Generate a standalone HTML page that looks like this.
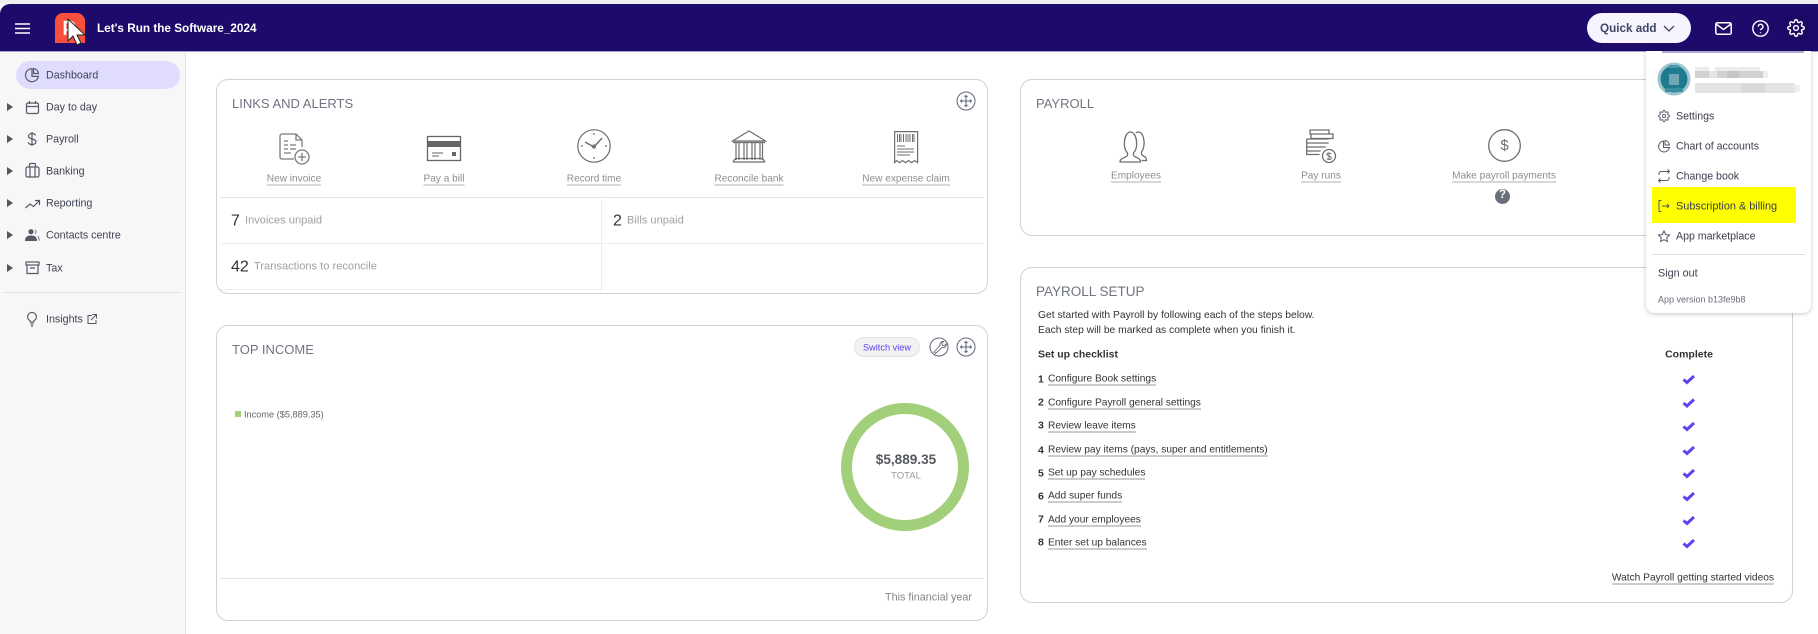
<!DOCTYPE html>
<html><head><meta charset="utf-8"><style>
html,body{margin:0;padding:0}
body{width:1818px;height:634px;position:relative;overflow:hidden;background:#fff;font-family:"Liberation Sans",sans-serif;color:#555}
.t{position:absolute;white-space:nowrap;transform:translateY(-50%);line-height:1.2}
.c{transform:translate(-50%,-50%);text-align:center}
.r{transform:translate(-100%,-50%)}
.box{position:absolute;box-sizing:border-box}
.card{position:absolute;box-sizing:border-box;border:1px solid #d2d2d2;border-radius:12px;background:#fff}
.h{font-size:13px;color:#6f7480}
.lnk{font-size:10.1px;color:#8d8d8d;border-bottom:1px solid #b0b0b0;line-height:10px}
.nav{font-size:10.7px;color:#3f4254;left:46px;margin-top:.5px}
.arr{position:absolute;left:7px;width:0;height:0;border-left:6px solid #555;border-top:4.5px solid transparent;border-bottom:4.5px solid transparent}
.num{font-size:16px;color:#333}
.lab{font-size:11.1px;color:#a0a0a0}
.s{font-size:10.2px;color:#333}
.b{font-weight:bold;color:#333}
.sb{font-size:10.5px}
.sl{border-bottom:1px solid #9a9a9a;line-height:10px}
.m{font-size:10.6px;color:#3a3d4d}
svg{position:absolute;overflow:visible}
</style></head><body>

<div class="box" style="left:0;top:0;width:1818px;height:4px;background:#f0f0f0"></div>
<div class="box" style="left:0;top:52px;width:186px;height:582px;background:#f7f7f7;border-right:1px solid #e6e6e6"></div>
<div class="box" style="left:0;top:4px;width:1818px;height:47px;background:#1d0a6b;border-top-left-radius:10px"></div>
<div class="box" style="left:0;top:51px;width:1818px;height:1px;background:#a79fc9"></div>
<div class="box" style="left:1783px;top:15px;width:27px;height:27px;background:#1b0963"></div>

<svg style="left:15px;top:23px" width="15" height="11" fill="none" stroke="#fff" stroke-width="1.6"><path d="M0 1h15M0 5.500h15M0 10h15"/></svg>
<svg style="left:55px;top:13px" width="32" height="36" viewBox="0 0 32 36">
<path d="M0 30V8a8 8 0 0 1 8-8h14a8 8 0 0 1 8 8v22z" fill="#f9503e"/>
<path d="M10 22V9h5a3.500 3.500 0 0 1 0 8h-5" stroke="#fff" stroke-width="2.600" fill="none"/>
<path d="M13 6v22l5-5 4 9 4-2-4-8h8z" fill="#fff" stroke="#222" stroke-width="1"/>
</svg>
<div class="t b" style="left:97px;top:29px;font-size:11.75px;color:#fff">Let's Run the Software_2024</div>

<div class="box" style="left:1587px;top:13px;width:104px;height:30px;border-radius:15px;background:#f6f5ff"></div>
<div class="t" style="left:1600px;top:29px;font-size:11.7px;font-weight:bold;color:#3f4462">Quick add</div>
<svg style="left:1663px;top:25px" width="12" height="8" fill="none" stroke="#3f4462" stroke-width="1.300"><path d="M1 1l5 5 5-5"/></svg>
<svg style="left:1715px;top:22px" width="17" height="13" fill="none" stroke="#fff" stroke-width="1.500"><rect x=".8" y=".8" width="15.400" height="11.400" rx="1.500"/><path d="M1 2l7.500 5.500L16 2"/></svg>
<svg style="left:1752px;top:20px" width="17" height="17" fill="none" stroke="#fff" stroke-width="1.400"><circle cx="8.500" cy="8.500" r="7.700"/><path d="M6.300 6.700a2.300 2.300 0 1 1 3.300 2c-.8.4-1.100.9-1.100 1.600"/><path d="M8.500 12.300v1" stroke-width="1.500"/></svg>
<svg style="left:1787px;top:19px" width="18" height="18" viewBox="0 0 24 24" fill="none" stroke="#fff" stroke-width="1.900" stroke-linejoin="round"><circle cx="12" cy="12" r="3.200"/><path d="M19.4 15a1.65 1.65 0 0 0 .33 1.82l.06.06a2 2 0 0 1 0 2.83 2 2 0 0 1-2.83 0l-.06-.06a1.65 1.65 0 0 0-1.82-.33 1.65 1.65 0 0 0-1 1.51V21a2 2 0 0 1-2 2 2 2 0 0 1-2-2v-.09A1.65 1.65 0 0 0 9 19.4a1.65 1.65 0 0 0-1.82.33l-.06.06a2 2 0 0 1-2.83 0 2 2 0 0 1 0-2.83l.06-.06a1.65 1.65 0 0 0 .33-1.82 1.65 1.65 0 0 0-1.51-1H3a2 2 0 0 1-2-2 2 2 0 0 1 2-2h.09A1.65 1.65 0 0 0 4.6 9a1.65 1.65 0 0 0-.33-1.82l-.06-.06a2 2 0 0 1 0-2.83 2 2 0 0 1 2.83 0l.06.06a1.65 1.65 0 0 0 1.82.33H9a1.65 1.65 0 0 0 1-1.51V3a2 2 0 0 1 2-2 2 2 0 0 1 2 2v.09a1.65 1.65 0 0 0 1 1.51 1.65 1.65 0 0 0 1.82-.33l.06-.06a2 2 0 0 1 2.83 0 2 2 0 0 1 0 2.83l-.06.06a1.65 1.65 0 0 0-.33 1.82V9a1.65 1.65 0 0 0 1.51 1H21a2 2 0 0 1 2 2 2 2 0 0 1-2 2h-.09a1.65 1.65 0 0 0-1.51 1z"/></svg>

<!-- sidebar -->
<div class="box" style="left:16px;top:61px;width:164px;height:28px;border-radius:14px;background:#e0dcfd"></div>
<div class="t nav" style="top:75px">Dashboard</div>
<div class="t nav" style="top:107px">Day to day</div>
<div class="t nav" style="top:139px">Payroll</div>
<div class="t nav" style="top:171px">Banking</div>
<div class="t nav" style="top:203px">Reporting</div>
<div class="t nav" style="top:235px">Contacts centre</div>
<div class="t nav" style="top:268px">Tax</div>
<div class="t nav" style="top:319px">Insights</div>
<div class="arr" style="top:103px"></div><div class="arr" style="top:135px"></div><div class="arr" style="top:167px"></div><div class="arr" style="top:199px"></div><div class="arr" style="top:231px"></div><div class="arr" style="top:264px"></div>
<div class="box" style="left:4px;top:292px;width:176px;height:1px;background:#e0e0e0"></div>

<svg style="left:0;top:0" width="186" height="340" fill="none" stroke="#555a6b" stroke-width="1.200">
<path d="M32 68.700a6.500 6.500 0 1 0 6.400 7.700H32z"/><path d="M33.500 68.500a6 6 0 0 1 5 5h-5z"/>
<rect x="26.500" y="103" width="12" height="10.500" rx="1.500"/><path d="M26.500 106.500h12M29.500 101v3M35.500 101v3"/>
<path d="M32 132v14M35.500 135.500c-.5-1.500-2-2-3.500-2-2 0-3.500 1-3.500 2.800 0 3.500 7.500 2 7.500 5.500 0 1.800-1.700 2.700-4 2.700-1.700 0-3.300-.7-3.800-2.200"/>
<rect x="26" y="167" width="13" height="10" rx="1.500"/><path d="M29.500 167v-2.500a1 1 0 0 1 1-1h4a1 1 0 0 1 1 1v2.500M30 167v10M35 167v10"/>
<path d="M25.500 208l4.500-4 3.500 2.500 5.500-5.500M35 200.500h4.500V205"/>
<rect x="26" y="262" width="13" height="3"/><path d="M27 265v8.500h11V265M30 268h5"/>
<path d="M32 312.500a4.300 4.300 0 0 0-2.300 8c.5.400.7 1 .7 1.500h3.200c0-.5.200-1.100.7-1.500a4.300 4.300 0 0 0-2.300-8zM30.500 324h3M31 326h2"/>
<path d="M92 315.500h-4v8h8v-3.500M91 320l5-5M92.500 314.500h4v4" stroke-width="1"/>
</svg>
<svg style="left:25px;top:229px" width="15" height="12" fill="#555a6b"><circle cx="6" cy="2.700" r="2.600"/><path d="M0 12c0-4 2-5.500 6-5.500S12 8 12 12z"/><path d="M10 .8a2.300 2.300 0 0 1 0 4M13 7l1.500 4.500" stroke="#555a6b" fill="none" stroke-width=".8"/></svg>

<!-- Links and alerts -->
<div class="card" style="left:216px;top:79px;width:772px;height:215px"></div>
<div class="t h" style="left:232px;top:104px">LINKS AND ALERTS</div>
<svg style="left:956px;top:91px" width="20" height="20" fill="none" stroke="#5f6478"><circle cx="10" cy="10" r="9"/><path d="M10 4.500v11M4.500 10h11" stroke-width="1"/><path d="M8.500 6L10 4.500 11.500 6M8.500 14l1.500 1.500 1.500-1.500M6 8.500L4.500 10 6 11.500M14 8.500l1.500 1.500-1.500 1.500" stroke-width="1"/></svg>

<svg style="left:279px;top:133px" width="32" height="34" fill="none" stroke="#7a7a7a" stroke-width="1.300">
<path d="M15 26H3a2 2 0 0 1-2-2V3a2 2 0 0 1 2-2h14l6 6v7"/><path d="M17 1v6h6M5 8h4M5 12h4M11 12h6M5 16h4M11 16h6M5 20h7"/><circle cx="23" cy="24" r="7"/><path d="M23 20v8M19 24h8"/></svg>
<svg style="left:427px;top:136px" width="34" height="26"><rect x=".5" y=".5" width="33" height="24" fill="none" stroke="#666" stroke-width="1.300"/><rect x="1" y="5" width="32" height="6" fill="#666"/><path d="M5 17h11M5 20h7" stroke="#666" fill="none"/><rect x="25" y="16" width="4" height="4" fill="#666"/></svg>
<svg style="left:577px;top:129px" width="34" height="34" fill="none" stroke="#6e6e6e" stroke-width="1.200"><circle cx="17" cy="17" r="16.200"/><path d="M17 18L8 13M17 18l8-9" stroke-width="1.400"/><circle cx="17" cy="17.500" r="1.500"/><path d="M17 4v2M17 28v2M4 17h2M28 17h2" stroke-width="1.200"/></svg>
<svg style="left:732px;top:130px" width="34" height="33" fill="none" stroke="#6e6e6e" stroke-width="1.200"><path d="M.5 11L17 1l16.500 10zM1 12.500h32"/><path d="M4 13v17M7 13v17M12 13v17M15 13v17M20 13v17M23 13v17M28 13v17M30.500 13v17M3 28.500h28M1 32h32M1 32l2-3M33 32l-2-3"/></svg>
<svg style="left:894px;top:131px" width="24" height="33" fill="none" stroke="#6e6e6e" stroke-width="1.200"><path d="M.6.600h23v31l-3-2-3 2-3-2-3 2-3-2-3 2-3-2-2 2z"/><path d="M3.500 3v8M5.500 3v8M7 3v8M9.500 3v8M12 3v8M14 3v8M16 3v8M18.500 3v8M20 3v8M3 15h8M3 18h17M3 21h17M3 24h13" stroke-width="1"/></svg>

<div class="t lnk c" style="left:294px;top:180px">New invoice</div>
<div class="t lnk c" style="left:444px;top:180px">Pay a bill</div>
<div class="t lnk c" style="left:594px;top:180px">Record time</div>
<div class="t lnk c" style="left:749px;top:180px">Reconcile bank</div>
<div class="t lnk c" style="left:906px;top:180px">New expense claim</div>

<div class="box" style="left:220px;top:197px;width:764px;height:1px;background:#e3e3e3"></div>
<div class="box" style="left:220px;top:243px;width:764px;height:1px;background:#eee"></div>
<div class="box" style="left:220px;top:289px;width:382px;height:1px;background:#eee"></div>
<div class="box" style="left:601px;top:197px;width:1px;height:92px;background:#eee"></div>
<div class="t num" style="left:231px;top:221px">7</div><div class="t lab" style="left:245px;top:220.5px">Invoices unpaid</div>
<div class="t num" style="left:613px;top:221px">2</div><div class="t lab" style="left:627px;top:220.5px">Bills unpaid</div>
<div class="t num" style="left:231px;top:266.5px">42</div><div class="t lab" style="left:254px;top:266.5px">Transactions to reconcile</div>

<!-- Top income -->
<div class="card" style="left:216px;top:325px;width:772px;height:296px"></div>
<div class="t h" style="left:232px;top:350px">TOP INCOME</div>
<div class="box" style="left:854px;top:337px;width:66px;height:20px;border-radius:10px;background:#f2f2f2;border:1px solid #e2e2e2"></div>
<div class="t c" style="left:887px;top:347.5px;font-size:9.2px;color:#5a3ff0">Switch view</div>
<svg style="left:929px;top:337px" width="20" height="20" fill="none" stroke="#5f6478"><circle cx="10" cy="10" r="9"/><path d="M5 15l6-6.500c-.5-2 .8-4.500 3.800-4.200l-2 2 .5 2 2 .5 2-2c.3 3-2.200 4.300-4.200 3.800L6.500 16.500z" stroke-width=".9"/></svg>
<svg style="left:956px;top:337px" width="20" height="20" fill="none" stroke="#5f6478"><circle cx="10" cy="10" r="9"/><path d="M10 4.500v11M4.500 10h11" stroke-width="1"/><path d="M8.500 6L10 4.500 11.500 6M8.500 14l1.500 1.500 1.500-1.500M6 8.500L4.500 10 6 11.500M14 8.500l1.500 1.500-1.500 1.500" stroke-width="1"/></svg>
<div class="box" style="left:235px;top:411px;width:6px;height:6px;background:#a2cf7a"></div>
<div class="t" style="left:244px;top:415px;font-size:9.2px;color:#666">Income ($5,889.35)</div>
<svg style="left:841px;top:403px" width="128" height="128"><circle cx="64" cy="64" r="58.500" fill="none" stroke="#a2cf7a" stroke-width="11"/></svg>
<div class="t c b" style="left:906px;top:460px;font-size:13.6px;color:#55585f">$5,889.35</div>
<div class="t c" style="left:906px;top:476px;font-size:9.5px;color:#999">TOTAL</div>
<div class="box" style="left:220px;top:578px;width:764px;height:1px;background:#e3e3e3"></div>
<div class="t r" style="left:972px;top:598px;font-size:10.8px;color:#858585">This financial year</div>

<!-- Payroll -->
<div class="card" style="left:1020px;top:79px;width:773px;height:157px"></div>
<div class="t h" style="left:1036px;top:104px">PAYROLL</div>
<svg style="left:1119px;top:130px" width="30" height="34" viewBox="0 0 30 32" fill="none" stroke="#6e6e6e" stroke-width="1.300"><path d="M1 31c0-3 3-4 5.500-5 2-1 2.500-2 2-4-3-3-3.500-7-3-12 .5-5 3-9 6-9s5.500 4 6 9c.5 5 0 9-3 12-.5 2 0 3 2 4 2.500 1 5 2 5 5z"/><path d="M17 2c.8-1 1.500-1 2.500-1 3 0 5 4 5.500 9 .5 5-.5 8-2.500 11-.3 2 0 3 2 4 1.500.7 3 1.500 3 4.500h-5"/></svg>
<svg style="left:1306px;top:129px" width="31" height="34" fill="none" stroke="#6e6e6e" stroke-width="1.300"><path d="M4 1h19v4H4zM5 5h22v4.500H5zM.7 10h22M.7 10v4h22M.7 14v4h19M.7 18v4h14M.7 22v3.500h13"/><circle cx="23" cy="27" r="6.500"/><path d="M25 25c-.4-1.200-4-1.600-4 .5s4.200 1 4.200 3.400-4.200 1.700-4.400.4M23 23.500v7.500" stroke-width="1"/></svg>
<svg style="left:1488px;top:129px" width="33" height="33" fill="none" stroke="#6e6e6e" stroke-width="1.300"><circle cx="16.500" cy="16.500" r="15.800"/></svg>
<div class="t c b" style="left:1504.5px;top:146px;font-size:15px;color:#6e6e6e;font-weight:normal">$</div>
<div class="t lnk c" style="left:1136px;top:177px">Employees</div>
<div class="t lnk c" style="left:1321px;top:177px">Pay runs</div>
<div class="t lnk c" style="left:1504px;top:177px">Make payroll payments</div>
<div class="box" style="left:1495px;top:188.500px;width:15px;height:15px;border-radius:50%;background:#6b6f7c"></div>
<div class="t c b" style="left:1502.5px;top:196px;font-size:11.5px;color:#fff">?</div>

<!-- Payroll setup -->
<div class="card" style="left:1020px;top:267px;width:773px;height:336px"></div>
<div class="t h" style="left:1036px;top:292px;font-size:13.5px">PAYROLL SETUP</div>
<div class="t s" style="left:1038px;top:316px;font-size:10.3px">Get started with Payroll by following each of the steps below.</div>
<div class="t s" style="left:1038px;top:331px;font-size:10.3px">Each step will be marked as complete when you finish it.</div>
<div class="t s b sb" style="left:1038px;top:355px">Set up checklist</div>
<div class="t s b sb c" style="left:1689px;top:355px">Complete</div>

<div class="t s b sb" style="left:1038px;top:379.5px">1</div><div class="t s sl" style="left:1048px;top:380px">Configure Book settings</div>
<div class="t s b sb" style="left:1038px;top:403px">2</div><div class="t s sl" style="left:1048px;top:404px">Configure Payroll general settings</div>
<div class="t s b sb" style="left:1038px;top:426px">3</div><div class="t s sl" style="left:1048px;top:427px">Review leave items</div>
<div class="t s b sb" style="left:1038px;top:450.5px">4</div><div class="t s sl" style="left:1048px;top:451px">Review pay items (pays, super and entitlements)</div>
<div class="t s b sb" style="left:1038px;top:473.5px">5</div><div class="t s sl" style="left:1048px;top:474px">Set up pay schedules</div>
<div class="t s b sb" style="left:1038px;top:496.5px">6</div><div class="t s sl" style="left:1048px;top:497px">Add super funds</div>
<div class="t s b sb" style="left:1038px;top:520px">7</div><div class="t s sl" style="left:1048px;top:521px">Add your employees</div>
<div class="t s b sb" style="left:1038px;top:543px">8</div><div class="t s sl" style="left:1048px;top:544px">Enter set up balances</div>
<svg style="left:1682px;top:370px" width="14" height="180" fill="none" stroke="#5b45f0" stroke-width="3"><path d="M1.500 9.500l3.500 3 7-6.500M1.500 33l3.500 3 7-6.500M1.500 56.500l3.500 3 7-6.500M1.500 80.500l3.500 3 7-6.500M1.500 103.500l3.500 3 7-6.500M1.500 126.500l3.500 3 7-6.500M1.500 150.500l3.500 3 7-6.500M1.500 173.500l3.500 3 7-6.500"/></svg>
<div class="t s sl r" style="left:1774px;top:579px">Watch Payroll getting started videos</div>

<!-- Menu -->
<div class="box" style="left:1646px;top:51px;width:165px;height:262px;background:#fff;border-radius:0 0 8px 8px;box-shadow:0 1px 5px rgba(0,0,0,.22)"></div>
<div class="box" style="left:1662px;top:51px;width:142px;height:2px;background:#b0a8d0"></div>
<svg style="left:1657px;top:62px" width="34" height="34">
<circle cx="17" cy="17" r="16.500" fill="#9cc6cf"/>
<circle cx="17" cy="17" r="13.500" fill="#1f7a90"/>
<g shape-rendering="crispEdges"><rect x="12" y="12" width="10" height="11" fill="#6fa8b4"/><rect x="8" y="26" width="18" height="4" fill="#3a8ea2"/><rect x="12" y="3" width="10" height="3" fill="#4e97a9"/></g>
</svg>
<svg style="left:1695px;top:67px" width="110" height="30" shape-rendering="crispEdges">
<rect x="0" y="0" width="14" height="5" fill="#ececec"/><rect x="20" y="0" width="45" height="5" fill="#ececec"/>
<rect x="0" y="4" width="68" height="7" fill="#d2d2d2"/><rect x="14" y="4" width="8" height="7" fill="#e4e4e4"/><rect x="32" y="4" width="12" height="7" fill="#c6c6c6"/><rect x="68" y="4" width="5" height="7" fill="#efefef"/>
<rect x="0" y="16" width="100" height="10" fill="#e4e4e4"/><rect x="46" y="17" width="24" height="8" fill="#d9d9d9"/><rect x="100" y="18" width="5" height="7" fill="#f0f0f0"/>
</svg>
<div class="box" style="left:1652px;top:187px;width:144px;height:36px;background:#ff0"></div>
<div class="t m" style="left:1676px;top:117px">Settings</div>
<div class="t m" style="left:1676px;top:147px">Chart of accounts</div>
<div class="t m" style="left:1676px;top:177px">Change book</div>
<div class="t m" style="left:1676px;top:207px;font-size:10.9px">Subscription &amp; billing</div>
<div class="t m" style="left:1676px;top:237px">App marketplace</div>
<div class="box" style="left:1652px;top:254px;width:153px;height:1px;background:#e0deea"></div>
<div class="t m" style="left:1658px;top:273.5px;font-size:10.8px">Sign out</div>
<div class="t" style="left:1658px;top:300px;font-size:9px;color:#6a6d7a">App version b13fe9b8</div>
<svg style="left:1658px;top:110px" width="12" height="12" viewBox="0 0 24 24" fill="none" stroke="#555a6b" stroke-width="1.900"><circle cx="12" cy="12" r="3.200"/><path d="M19.4 15a1.65 1.65 0 0 0 .33 1.82l.06.06a2 2 0 0 1 0 2.83 2 2 0 0 1-2.83 0l-.06-.06a1.65 1.65 0 0 0-1.82-.33 1.65 1.65 0 0 0-1 1.51V21a2 2 0 0 1-2 2 2 2 0 0 1-2-2v-.09A1.65 1.65 0 0 0 9 19.4a1.65 1.65 0 0 0-1.82.33l-.06.06a2 2 0 0 1-2.83 0 2 2 0 0 1 0-2.83l.06-.06a1.65 1.65 0 0 0 .33-1.82 1.65 1.65 0 0 0-1.51-1H3a2 2 0 0 1-2-2 2 2 0 0 1 2-2h.09A1.65 1.65 0 0 0 4.6 9a1.65 1.65 0 0 0-.33-1.82l-.06-.06a2 2 0 0 1 0-2.83 2 2 0 0 1 2.83 0l.06.06a1.65 1.65 0 0 0 1.82.33H9a1.65 1.65 0 0 0 1-1.51V3a2 2 0 0 1 2-2 2 2 0 0 1 2 2v.09a1.65 1.65 0 0 0 1 1.51 1.65 1.65 0 0 0 1.82-.33l.06-.06a2 2 0 0 1 2.83 0 2 2 0 0 1 0 2.83l-.06.06a1.65 1.65 0 0 0-.33 1.82V9a1.65 1.65 0 0 0 1.51 1H21a2 2 0 0 1 2 2 2 2 0 0 1-2 2h-.09a1.65 1.65 0 0 0-1.51 1z"/></svg>
<svg style="left:1658px;top:108px" width="14" height="140" fill="none" stroke="#555a6b" stroke-width="1">
<path d="M5.500 33a5.500 5.500 0 1 0 6 6.500h-6z"/><path d="M7 32.500a5 5 0 0 1 4.500 4.500H7z"/>
<path d="M1 67v-1.500a2 2 0 0 1 2-2h8.500M9.500 61.500l2 2-2 2M11 69v1.500a2 2 0 0 1-2 2H.5M2.500 70.500l-2 2 2 2"/>
<path d="M3.500 92.500H1v11h2.500M4 98h7M9 96l2 2-2 2"/>
<path d="M6 123l1.700 3.500 3.800.5-2.800 2.700.7 3.800L6 131.700l-3.400 1.800.7-3.800-2.800-2.700 3.800-.5z"/>
</svg>
</body></html>
